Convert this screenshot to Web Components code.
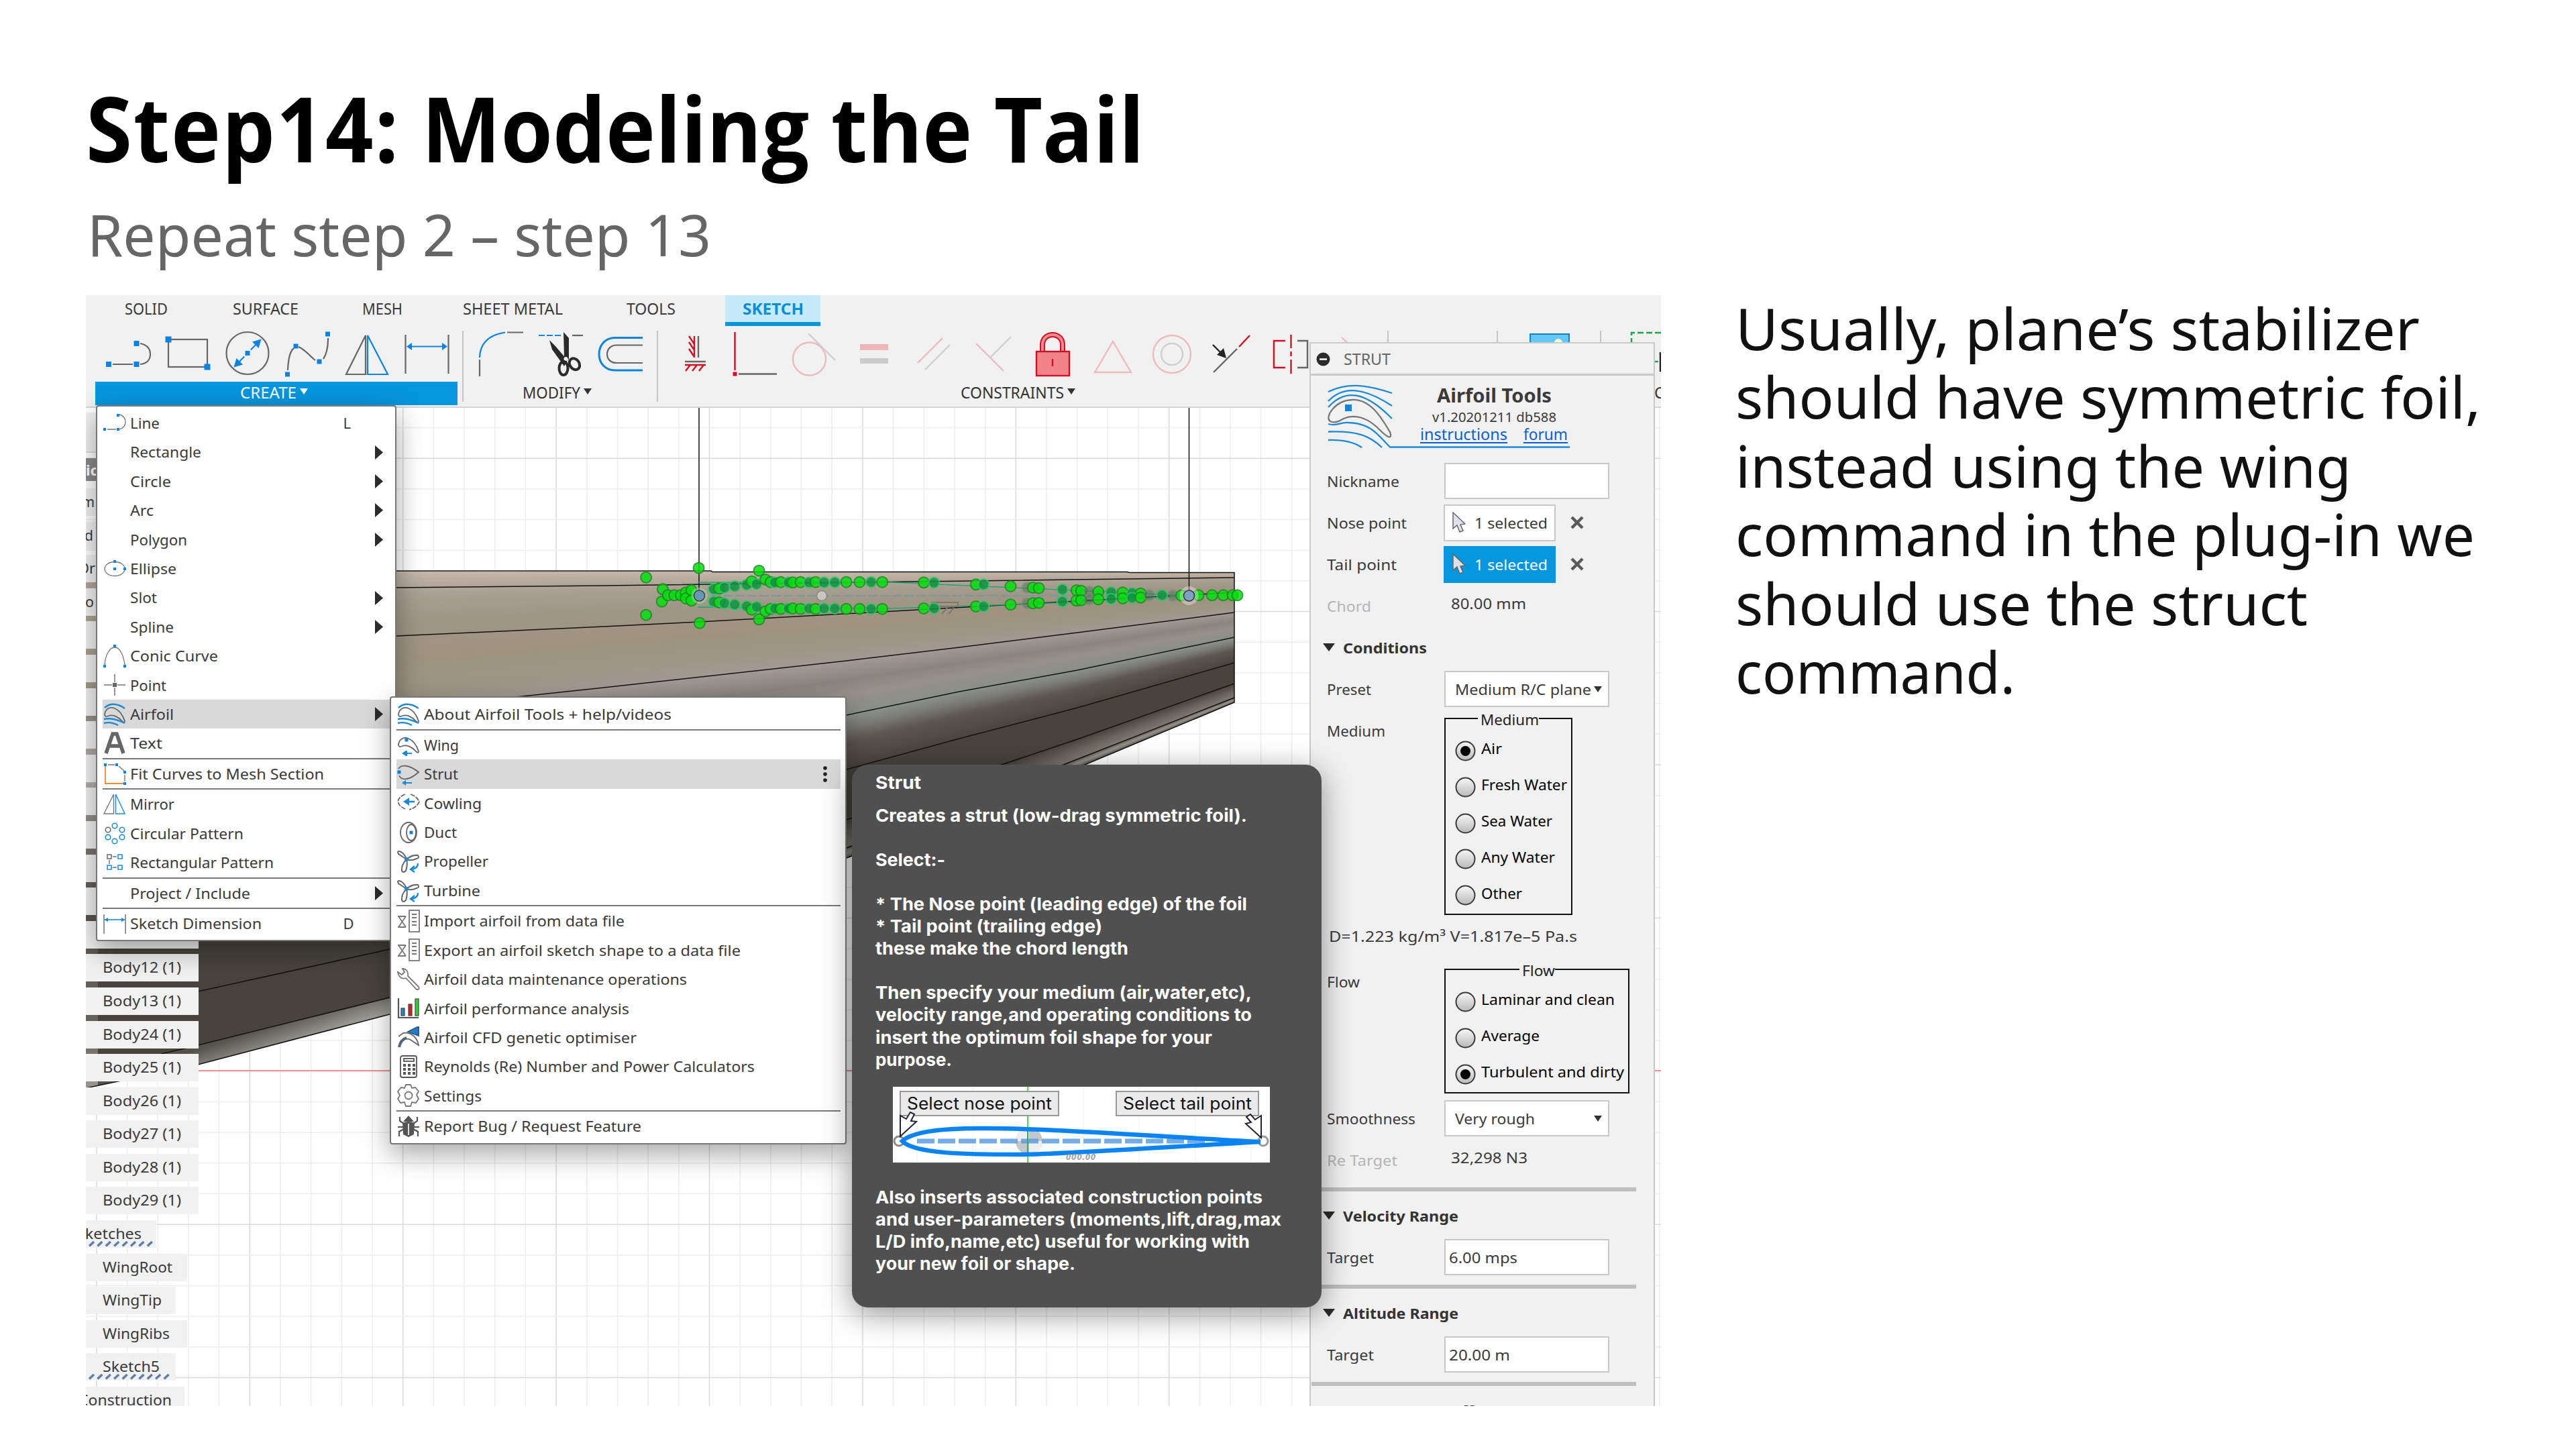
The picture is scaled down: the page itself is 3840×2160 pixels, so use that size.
<!DOCTYPE html>
<html lang="en">
<head>
<meta charset="utf-8">
<title>Step14: Modeling the Tail</title>
<style>
html,body{margin:0;padding:0;background:#fff}
body{width:3840px;height:2160px;overflow:hidden;font-family:"Noto Sans","Open Sans",sans-serif}
</style>
</head>
<body>
<slide-page></slide-page>
<script>
const B='#1a8ad6', G='#666', K='#333';
const define=(name,render)=>customElements.define(name,class extends HTMLElement{
  constructor(){super();this.attachShadow({mode:'open'});}
  connectedCallback(){if(!this.shadowRoot.firstChild)this.shadowRoot.innerHTML=render(this);}
});
const sq=(x,y,s=9,c='#0a84e0')=>`<rect x="${x-s/2}" y="${y-s/2}" width="${s}" height="${s}" fill="${c}" stroke="none"/>`;
const foil='<path d="M2 17C3 8 11 5 17 8C25 11 29 18 32 27C32 30 30 29 28 27C22 20 14 17 8 19C4 21 2 20 2 17Z" stroke="#666"/>';
const waves=`<g stroke="${B}" stroke-width="2.4"><path d="M2 7C10 0 20 0 32 8"/><path d="M1 24C11 22 19 24 32 30"/><path d="M1 30C8 28 16 30 22 33"/></g>`;
const prop='<g stroke="#666" stroke-width="2"><path d="M14 14L2 6Q-1 0 6 3Q12 7 14 14Z"/><path d="M14 14Q22 7 31 8Q34 12 29 13Q20 17 14 14Z"/><path d="M14 14Q6 22 7 31Q9 35 13 31Q16 22 14 14Z"/></g><g stroke="#1a8ad6" stroke-width="2.4"><path d="M31 20Q31 27 22 29M26 24L20 29L26 33"/></g><circle cx="14" cy="14" r="3" fill="#1a8ad6"/>';
const sheet='<g stroke="#777" stroke-width="1.8"><path d="M1 10H13M1 26H13M2 10L13 26M13 10L2 26"/><rect x="18" y="1" width="15" height="32"/><path d="M22 7H29M22 12H29M22 18H29M22 23H29"/></g>';
const ICONS={
 line:`<path d="M6 26H19M24 4C30 5 33 10 33 15S30 24 24 26" stroke="#777" stroke-width="1.3"/>${sq(2,26,4)}${sq(22,26,4)}${sq(22,5,4)}`,
 ellipse:`<ellipse cx="17" cy="17" rx="15" ry="10.500" stroke="#777" stroke-width="1.3"/>${sq(17,6,4)}${sq(17,17,4)}${sq(32,17,4)}`,
 conic:`<path d="M2 30C3 16 9 4 17 4S30 16 32 30" stroke="#777" stroke-width="1.3"/>${sq(2,32,4)}${sq(32,32,4)}${sq(17,2,4)}`,
 point:`<path d="M1 17H13M21 17H33M17 1V13M17 21V33" stroke="#777" stroke-width="1.5"/>${sq(17,17,6,'#666')}`,
 airfoil:foil+waves,
 text:'<path d="M4 32L14 3H20L30 32M9 21H25" stroke="#666" stroke-width="5.500"/>',
 fit:`<path d="M3 5V31H32" stroke="#f08a30" stroke-width="1.8"/><path d="M7 3H17M23 5L31 12M32 18V28" stroke="#777" stroke-width="1.4"/>${sq(3,3,4)}${sq(20,3,4)}${sq(32,14,4)}${sq(32,31,4)}`,
 mirror:`<path d="M15.500 2V31H1Z" stroke="#777" stroke-width="1.4"/><path d="M18.500 2V31H32Z" stroke="${B}" stroke-width="1.4"/>`,
 circ:`<g stroke="${B}" stroke-width="1.5"><circle cx="17" cy="5" r="3.800"/><circle cx="28" cy="11" r="3.800"/><circle cx="28" cy="22" r="3.800"/><circle cx="17" cy="28" r="3.800"/><circle cx="7" cy="22" r="3.800"/><circle cx="7" cy="11" r="3.800" stroke="#666"/></g>`,
 rect:`<g stroke="${B}" stroke-width="1.5"><rect x="6" y="5" width="6" height="6" stroke="#666"/><rect x="22" y="5" width="6" height="6"/><rect x="6" y="21" width="6" height="6"/><rect x="22" y="21" width="6" height="6"/><path d="M14 8H20M14 24H20M9 13V19" stroke="#777"/></g>`,
 dim:`<path d="M1 3V32M33 3V32" stroke="#666" stroke-width="1.4"/><path d="M3 11H31" stroke="${B}" stroke-width="1.6"/><path d="M1 11L7 8V14ZM33 11L27 8V14Z" fill="${B}"/>`,
 wing:`<g transform="translate(0 -1)">${foil}</g>${sq(14,9,5)}<path d="M10 29H22M14 25V33" stroke="${B}" stroke-width="2"/><path d="M7 29L13 25V33Z" fill="${B}"/>`,
 strut:`<path d="M2 9C6 2 18 3 32 14C20 25 7 28 3 19" stroke="#666"/>${sq(3,14,5)}<path d="M10 30H22" stroke="${B}" stroke-width="2"/><path d="M7 30L13 26V34Z" fill="${B}"/>`,
 cowl:`<path d="M12 4C-2 9-2 20 12 26M20 4C27 6 32 12 33 15C31 20 26 25 18 27" stroke="#666" stroke-dasharray="7 1.500"/><path d="M14 15H26" stroke="${B}" stroke-width="2.600"/><path d="M9 15L18 9V21Z" fill="${B}"/>`,
 duct:`<ellipse cx="17" cy="17" rx="12" ry="15" stroke="#666"/><ellipse cx="21" cy="17" rx="7" ry="12" stroke="#666"/>${sq(21,17,5)}`,
 prop, sheet,
 wrench:'<path d="M1 6C2 14 8 17 13 15L29 32Q34 33 32 28L16 12C17 6 14 1 8 1L11 6L7 10Z" stroke="#777"/>',
 chart:'<path d="M2 2V31H32" stroke="#555" stroke-width="2.200"/><g stroke="#444" stroke-width="1.200"><rect x="6" y="17" width="5" height="11" fill="#2f7fc0"/><rect x="17" y="11" width="5" height="17" fill="#d02020"/><rect x="27" y="3" width="5" height="25" fill="#2fd32f"/></g>',
 cfd:'<path d="M3 30C5 22 12 16 20 20L32 28C30 16 20 8 9 10L2 15" stroke="#666"/><path d="M3 31Q5 20 14 17" stroke="#567" stroke-width="4"/><path d="M16 8L32 0V14Z" fill="#1a7fd0" stroke="#357"/>',
 calc:'<rect x="5" y="1" width="24" height="32" rx="3" stroke="#555"/><rect x="10" y="5" width="15" height="4" stroke="#555"/><g stroke="#555" stroke-width="4" stroke-dasharray="4 3"><path d="M9 15H27M9 21H27M9 27H27"/></g>',
 gear:'<path d="M13 1H20L22 6L27 5L32 11L29 16L32 22L28 28L22 27L20 33H13L11 27L5 28L1 22L4 17L1 11L6 5L11 6Z" stroke="#777"/><circle cx="17" cy="17" r="5.500" stroke="#777"/>',
 bug:'<path d="M17 1L25 10H9ZM8 12Q17 8 26 12L25 29L17 33L9 29Z" fill="#555"/><path d="M4 3V9L10 13M30 3V9L24 13M1 18H33M3 32V25L10 21M31 32V25L24 21" stroke="#555" stroke-width="2.200"/><path d="M17 13V30" stroke="#ddd" stroke-width="2"/>'
};
const svgIcon=n=>`<svg viewBox="0 0 34 34" width="34" height="34" fill="none" stroke-width="1.8">${ICONS[n]||''}</svg>`;

/* menus */
define('menu-row',e=>`<style>
:host{display:flex;align-items:center;height:43.4px;line-height:43.4px;font-size:22px;color:#3a3a3a;padding-right:11px;box-sizing:border-box}
:host([on]){background:#d9d9d9}
.i{width:34px;height:34px;margin:0 6.800px 0 1px;flex:none}svg{display:block}
.r{margin-left:auto}.k{width:59px;margin-left:auto}
</style><span class="i">${svgIcon(e.getAttribute('icon'))}</span><fit-text w="${e.getAttribute('w')}">${e.getAttribute('label')}</fit-text>
${e.hasAttribute('sub')?'<svg class="r" width="12" height="21"><path d="M0 0L12 10.500L0 21Z" fill="#2b2b2b"/></svg>':''}
${e.hasAttribute('key')?`<span class="k">${e.getAttribute('key')}</span>`:''}
${e.hasAttribute('more')?'<svg class="r" width="8" height="26" style="margin-right:8px"><g fill="#222"><circle cx="4" cy="4" r="2.800"/><circle cx="4" cy="13" r="2.800"/><circle cx="4" cy="22" r="2.800"/></g></svg>':''}`);
define('menu-rule',()=>`<style>:host{display:block;height:2.200px;background:#7a7a7a}</style>`);
define('menu-box',()=>`<style>:host{display:block;box-sizing:border-box;background:#fff;border:2px solid #777;border-radius:4px;box-shadow:0 14px 40px rgba(0,0,0,.35)}
div{display:flex;flex-direction:column}</style><div><slot></slot></div>`);
const row=(l,w,i='',x='')=>`<menu-row label="${l}" w="${w}" icon="${i}" ${x}></menu-row>`;
const R='<menu-rule></menu-rule>';

/* ribbon */
const cv=c=>`<svg width="12" height="9" style="margin:0 0 3px 5px"><path d="M0 0H12L6 9Z" fill="${c}"/></svg>`;
define('ribbon-tab',e=>`<style>:host{display:flex;height:40px;align-items:center;justify-content:center;font-size:23px;color:#3a3a3a;box-sizing:content-box;border-bottom:6.500px solid transparent}
:host([on]){background:#c5ebfa;background-clip:padding-box;border-color:#0696d7;color:#0a8fd4;font-weight:700;width:142px}</style><fit-text w="${e.getAttribute('w')}"><slot></slot>${e.getAttribute('label')}</fit-text>`);
define('ribbon-group',e=>`<style>:host{display:flex;flex-direction:column;width:${e.getAttribute('width')}px;flex:none;height:117px}
svg{display:block}.l{display:flex;height:35px;line-height:33px;align-items:center;justify-content:center;font-size:23px;color:#333;box-sizing:border-box;padding-bottom:2px}
:host([on]) .l{background:#0696dd;color:#fff}</style><slot></slot>
<div class="l" style="padding-right:${e.getAttribute('pad')||0}px">${e.hasAttribute('label')?`<fit-text w="${e.getAttribute('w')}">${e.getAttribute('label')}</fit-text>${cv(e.hasAttribute('on')?'#fff':'#333')}`:''}</div>`);
define('ribbon-bar',()=>`<style>:host{display:block;height:166px;background:#f1f1f1;border-bottom:2px solid #d4d4d4}
.t{display:flex;height:46.500px}.g{display:flex}.s{width:2px;height:106px;background:#c6c6c6;margin-top:6px;flex:none}svg{display:block}</style>
<div class="t"><ribbon-tab label="SOLID" w="64" style="margin-left:58px"></ribbon-tab><ribbon-tab label="SURFACE" w="98" style="margin-left:97px"></ribbon-tab><ribbon-tab label="MESH" w="60" style="margin-left:95px"></ribbon-tab><ribbon-tab label="SHEET METAL" w="149" style="margin-left:90px"></ribbon-tab><ribbon-tab label="TOOLS" w="73" style="margin-left:95px"></ribbon-tab><ribbon-tab on label="SKETCH" w="91" style="margin-left:74px"></ribbon-tab></div>
<div class="g">
<ribbon-group on label="CREATE" w="84" width="540" pad="8" style="margin:0 7px 0 14px">
<svg width="540" height="82" viewBox="142 486 540 82" fill="none" stroke="${G}" stroke-width="2.200">
<path d="M168 542H198M209 511C219 513 224 519 224 527S219 541 209 542"/>${sq(162,542,8)}${sq(203.5,542,8)}${sq(203.5,511,8)}
<rect x="251" y="505" width="58" height="41"/>${sq(251,505)}${sq(309,546)}
<circle cx="369" cy="525.500" r="31.500"/><path d="M352 543L386 508" stroke="#0a84e0"/><path d="M388 506L378 509L385 516ZM350 545L360 542L353 535Z" fill="#0a84e0" stroke="#0a84e0"/><circle cx="369" cy="525.500" r="7" fill="#f1f1f1" stroke="none"/>${sq(369,525.5,7)}
<path d="M429 551Q430 524 438 518M445 516C455 520 464 532 470 536M482 534Q489 524 489 503"/>${sq(428.5,557,7)}${sq(441,515,7)}${sq(476,538,7)}${sq(488.5,497,7)}
<path d="M545 499V557H516Z"/><path d="M548 499V557H578Z" stroke="#0a84e0"/>
<path d="M604.500 498V556M668.500 498V556"/><path d="M608 515.500H665" stroke="#0a84e0"/><path d="M606 515.500L614 510V521ZM667 515.500L659 510V521Z" fill="#0a84e0" stroke="none"/>
</svg></ribbon-group><span class="s"></span>
<ribbon-group label="MODIFY" w="86" width="288" pad="10">
<svg width="288" height="82" viewBox="692 486 288 82" fill="none" stroke="${G}" stroke-width="2.200">
<path d="M716 532Q717 500 754 494.500" stroke="#0a84e0"/><path d="M757 494.500H781M716 535V560"/>
<path d="M804 499H837" stroke="#0a84e0" stroke-dasharray="9 3"/><path d="M854 499H870"/>
<path d="M841 494L849 503V535L842 531ZM820 506L828 514L847 536L842 545L824 520Z" fill="#2a2a2a" stroke="none"/><circle cx="844.500" cy="534" r="3" fill="#f1f1f1" stroke="none"/><ellipse cx="841" cy="548" rx="6.500" ry="10" stroke="#2a2a2a" stroke-width="4"/><ellipse cx="857.500" cy="542" rx="7" ry="9" transform="rotate(-35 857 542)" stroke="#2a2a2a" stroke-width="4"/>
<path d="M959 502.500H918C902 502.500 894 515 894 527S902 551 918 551H959" stroke="#0a84e0" stroke-width="3"/><path d="M959 513.500H920C911 513.500 906 520 906 527S911 540 920 540H959"/>
</svg></ribbon-group><span class="s"></span>
<ribbon-group label="CONSTRAINTS" w="154" width="1087" pad="14">
<svg width="1087" height="82" viewBox="982 486 1087 82" fill="none" stroke="#cf1126" stroke-width="2.400">
<path d="M1036 500V532M1028 500L1036 512M1028 509L1036 521M1028 519L1036 531M1022 543H1053M1030 543L1023 552M1040 543L1033 552M1050 543L1043 552"/><path d="M1042 500V532M1022 538H1053" stroke="${G}"/>
<path d="M1096.500 494V551"/><path d="M1102 556.500H1159" stroke="${G}"/>${sq(1096.5,556.5,6,'#cf1126')}
<g stroke="#efbabc"><circle cx="1207.500" cy="534" r="24.500"/><path d="M1369 540L1406 503M1456 511L1497 552M1660 508L1687 554H1633ZM2001 502L2020 520"/><circle cx="1748" cy="527" r="28"/></g>
<g stroke="#cfcfcf"><path d="M1206 496L1246 536M1380 550L1417 513M1508 501L1478 531"/><circle cx="1748" cy="527" r="16"/></g>
<rect x="1283" y="512" width="42" height="9" fill="#efb6b8" stroke="none"/><rect x="1283" y="533" width="42" height="8" fill="#cbcbcb" stroke="none"/>
<path d="M1555 522V513C1555 493 1585 493 1585 513V522" stroke-width="8"/><path d="M1555 522V513C1555 493 1585 493 1585 513V522" stroke="#ef8b90" stroke-width="4"/><rect x="1546" y="523" width="49" height="36" fill="#ef8388"/><path d="M1570 534V545"/>
<path d="M1848 516L1864 499M1917 507H1900V547H1917M1925.500 498V518M1925.500 523V530M1925.500 535V556"/><path d="M1810 554L1845 519M1935 507H1950V547H1935" stroke="${G}"/><path d="M1809 513L1824 528" stroke="#222"/><path d="M1829 533L1815 528L1825 518Z" fill="#222" stroke="none"/>
</svg></ribbon-group><span class="s"></span>
<ribbon-group width="161"></ribbon-group><span class="s"></span><ribbon-group width="152"><svg width="152" height="82" viewBox="2233 486 152 82"><rect x="2281" y="497" width="58" height="50" fill="#62c8fa" stroke="#1480c4" stroke-width="2"/><circle cx="2323" cy="510" r="6" fill="#fffcd0"/></svg></ribbon-group><span class="s"></span>
<ribbon-group width="89"><svg width="89" height="82" viewBox="2387 486 89 82" fill="none" stroke="#1ea54a" stroke-width="2.500" stroke-dasharray="9 4"><path d="M2476 495H2432V530M2467 538H2472"/><path d="M2475 524V553" stroke="#222" stroke-dasharray="none"/></svg></ribbon-group>
</div>`);

/* modelling canvas */
const mix=(a,b,t)=>'#'+[1,3,5].map(i=>Math.round(parseInt(a.substr(i,2),16)*(1-t)+parseInt(b.substr(i,2),16)*t).toString(16).padStart(2,'0')).join('');
const shade=(stops,t)=>{for(let i=1;i<stops.length;i++)if(t<=stops[i][0]){const[a,c]=stops[i-1],[b,d]=stops[i];return mix(c,d,(t-a)/(b-a));}return stops[stops.length-1][1];};
/* fills the region between two edge curves with strips that follow both of them */
function band(top,bot,stops,n=40){
 let o='';const low=bot.map((y,i)=>[XS[i],y]).reverse().map(p=>p.join(' ')).join('L');
 for(let k=0;k<n;k++){const up=top.map((y,i)=>XS[i]+' '+(y+(bot[i]-y)*k/n).toFixed(1)).join('L');o+=`<path d="M${up}L${low}Z" fill="${shade(stops,k/(n-1))}"/>`;}
 return o;
}
const XS=[128,580,900,1262,1430,1606,1840];
function canvas(){
 let g='';const p=45.68;
 for(let k=-21;k<32;k++){const x=1057.5+k*p;if(x>128)g+=`<path d="M${x.toFixed(1)} 607V2096" stroke="${k%5?'#ededed':'#dadada'}"/>`;}
 for(let k=-1;k<32;k++){const y=683.2+k*p;g+=`<path d="M128 ${y.toFixed(1)}H2476" stroke="${k%5?'#ededed':'#dadada'}"/>`;}
 const X=x=>900+x/1.568,Y=y=>800+y/3;
 const dark=[257,282,306,334,357,400,432,480,515,540,625,772,888,1072,1186,1235,1305],gray=[990,1135,1275,1330];
 const up=[[257,235],[270,232],[282,228],[306,222],[334,215],[346,200],[357,212],[378,192],[390,203],[400,205],[414,203],[432,205],[442,205],[460,203],[480,205],[495,203],[515,205],[540,205],[567,203],[598,203],[625,203],[651,203],[748,205],[772,206],[870,214],[888,214],[951,222],[990,228],[1003,228],[1017,230],[1072,236],[1105,240],[1116,242],[1135,245],[1156,246],[1186,248],[1213,250],[1235,252],[1255,254]];
 const pts=[...up,...up.map(([x,y])=>[x,526-y]),[99,182],[99,350],[222,140],[224,386],[363,152],[363,370],[138,235],[136,290],[150,262],[165,262],[180,262],[192,250],[192,276],[205,240],[205,286],[1275,262],[1305,262],[1330,264],[1350,263],[1390,262],[1422,262],[1448,262],[1470,262],[1481,262]];
 const d=pts.map(([x,y])=>{const c=dark.includes(x)?['#0f9440','#35c468']:gray.includes(x)?['#55705c','#6c8a74']:['#06e010','#1f8a22'];return `<circle cx="${X(x).toFixed(1)}" cy="${Y(y).toFixed(1)}" r="8" fill="${c[0]}" stroke="${c[1]}" stroke-width="2" opacity="${gray.includes(x)?.5:.86}"/>`}).join('');
 const edge='L1840 1047L1617 1140L1262 1279L900 1408L581 1512L295 1587L128 1622';
 const T=[851,851,851,852.5,852.5,853,853.5],l3=[1150,1072,1025,985,965,943,913],l4=[1290,1190,1130,1066,1031,999,950.7],l5=[1400,1330,1250,1147,1101,1055,988],l6=[1597,1487,1360,1222,1164,1102,1019],l7=[1609,1500,1390,1264,1200,1132,1040],ed=[1622,1512,1408,1279,1213,1144,1047];
 return `<svg width="2348" height="1488" viewBox="128 608 2348 1488" fill="none" stroke-width="1.500"><defs>
 <linearGradient id="f" gradientUnits="userSpaceOnUse" x1="0" y1="851" x2="0" y2="1620"><stop offset="0" stop-color="#b2a899"/><stop offset=".2" stop-color="#a79e8f"/><stop offset=".28" stop-color="#94908a"/><stop offset=".4" stop-color="#bab7b0"/><stop offset=".5" stop-color="#85827d"/><stop offset=".65" stop-color="#57544d"/><stop offset=".9" stop-color="#67655e"/><stop offset="1" stop-color="#98968f"/></linearGradient>
 <linearGradient id="e" gradientUnits="userSpaceOnUse" x1="430" y1="1518" x2="443" y2="1556"><stop offset="0" stop-color="#55524c"/><stop offset="1" stop-color="#a09e98"/></linearGradient>
 <clipPath id="m"><path d="M128 851L1840 853.500${edge}Z"/></clipPath></defs>
 ${g}<path d="M128 1596H2476" stroke="#f0939b" stroke-width="2"/>
 <g clip-path="url(#m)"><path d="M128 851L1840 853.500${edge}Z" fill="#48443d"/>
 ${band(T,l3,[[0,'#c1b6a8'],[.14,'#aba194'],[.32,'#a19787'],[.6,'#9d937f'],[.82,'#9e9583'],[1,'#a19a93']])}
 ${band(l3,l4,[[0,'#a19a93'],[.35,'#8a8580'],[.62,'#97918b'],[1,'#8b8f8a']])}
 ${band(l4,l5,[[0,'#8b918d'],[.22,'#7b7b77'],[.5,'#5c5650'],[1,'#4b4640']])}
 ${band(l6,l7,[[0,'#4b4640'],[.6,'#6d6861'],[1,'#7d7871']],20)}
 ${band(l7,ed,[[0,'#6a655f'],[.5,'#96938c'],[1,'#67635d']],10)}
 <path d="M128 1597L295 1558L581 1487L700 1457V1475L581 1512L295 1587L128 1622Z" fill="url(#e)"/>
 <path d="M128 851H146V1618L128 1622Z" fill="url(#f)"/></g>
 <path d="M128 851L1060 851L1062 852.500H1680L1684 853.500H1840${edge}" stroke="#111"/>
 <path d="M591 876L900 873L1840 861M591 948L900 934L1043 927L1840 883M740 1042L900 1025L1262 985L1430 965L1606 943L1840 913M1262 1066L1430 1031L1606 999L1840 950M1262 1147L1430 1101L1606 1055L1840 988M1262 1222L1493 1140L1606 1102L1840 1019M1262 1264L1585 1140L1840 1040M295 1478L581 1415M295 1558L581 1487M240 1571L280 1562" stroke="#15130f"/>
 <path d="M1042 608V888M1772.500 608V888" stroke="#111"/>
 <path d="M1060 888H1760" stroke="#6f98a8" stroke-dasharray="14 4"/><path d="M1040 868H1330L1600 880L1772 888L1600 898L1330 907L1040 905" stroke="#22a572"/>
 <g stroke="#7d776e" stroke-width="2"><path d="M1389 898H1428V904H1389ZM1402 906L1394 915M1412 906L1404 915M1422 906L1414 915"/></g>${d}
 <circle cx="1225" cy="888" r="7.500" fill="#c9c6bf" stroke="#8c887f"/>
 <circle cx="1042.500" cy="888" r="12" fill="#9fe6a0" opacity=".45"/><circle cx="1042.500" cy="888" r="8" fill="#6d96b5" stroke="#345"/><circle cx="1772.500" cy="888" r="14" fill="#fff" opacity=".35"/><circle cx="1772.500" cy="888" r="8" fill="#7f9fc4" stroke="#334"/>
 </svg>`;
}
define('model-view',()=>`<style>:host{display:block;background:#fff}svg{display:block}</style>${canvas()}`);

/* component tree */
define('tree-row',e=>`<style>:host{display:flex;height:41px;margin-bottom:8.600px;line-height:40px;font-size:22.500px;color:#3a3a3a;background:#f1f1f1;width:${e.getAttribute('bg')}px;box-sizing:border-box;padding-left:25px;overflow:hidden;flex:none;position:relative}
fit-text{margin-left:${e.getAttribute('dx')||0}px}svg{position:absolute;left:0;top:31px}</style>
<fit-text w="${e.getAttribute('w')}">${e.getAttribute('label')}</fit-text>${e.hasAttribute('hatch')?`<svg width="${e.getAttribute('hatch')}" height="9"><g stroke="#5f7fa8" stroke-width="3.500">${[...Array(10)].map((_,i)=>`<path d="M${5+i*12.4} 7.500L${12+i*12.4} 1"/>`).join('')}</g></svg>`:''}`);
const tr=(l,w,bg,x='')=>`<tree-row label="${l}" w="${w}" bg="${bg}" ${x}></tree-row>`;
define('component-tree',()=>`<style>:host{display:block;width:168px;height:1489px;overflow:hidden}
.top{height:58px;background:#f1f1f1;border-bottom:2px solid #ddd;margin-top:8px}.root{height:34px;background:#8a8a8a;margin:8px 0 11px;color:#fff;font:700 22px/34px "Noto Sans";width:16px;overflow:hidden}
.c{display:flex;flex-direction:column}</style><div class="top"></div><div class="root">ic</div><div class="c">
${tr('m',19,160,'dx="-31"')}${tr('d',13,160,'dx="-27"')}${tr('Or',26,160,'dx="-37"')}${tr('o',13,160,'dx="-26"')}${'<tree-row label="" w="0" bg="167.5"></tree-row>'.repeat(10)}
${[12,13,24,25,26,27,28,29].map(n=>tr(`Body${n} (1)`,117,167.5)).join('')}
${tr('Sketches',97,105,'dx="-39" hatch="103"')}${tr('WingRoot',104,151)}${tr('WingTip',88,134)}${tr('WingRibs',100,151)}${tr('Sketch5',85,134,'hatch="126"')}${tr('Construction',139,147,'dx="-36"')}</div>`);

/* strut dialog */
define('prop-row',e=>`<style>:host{display:flex;height:${e.getAttribute('h')||62}px;line-height:62px;align-items:${e.hasAttribute('h')?'flex-start':'center'};padding-left:24px}
.l{width:174px;flex:none;color:${e.hasAttribute('dim')?'#b5b5b5':'#3a3a3a'}}</style><span class="l"><fit-text w="${e.getAttribute('w')}">${e.getAttribute('label')}</fit-text></span><slot></slot>`);
define('section-head',e=>`<style>:host{display:flex;height:62px;line-height:62px;align-items:center;padding-left:17.500px;font-weight:700;color:#333}svg{margin:0 12px 1px 0}</style><svg width="18" height="12"><path d="M0 0H18L9 12Z" fill="#2b2b2b"/></svg><fit-text w="${e.getAttribute('w')}">${e.getAttribute('label')}</fit-text>`);
define('text-field',e=>`<style>:host{display:flex;align-items:center;box-sizing:border-box;width:246px;height:54px;margin-left:1px;background:#fff;border:2px solid #c8c8c8;padding:0 9px 0 ${e.hasAttribute('pick')?14:5}px;line-height:50px;justify-content:space-between}</style>${e.hasAttribute('label')?`<fit-text w="${e.getAttribute('w')}">${e.getAttribute('label')}</fit-text>`:''}${e.hasAttribute('pick')?'<svg width="12" height="9"><path d="M0 0H12L6 9Z" fill="#333"/></svg>':''}`);
define('select-chip',()=>`<style>:host{display:flex;align-items:center;box-sizing:border-box;width:167px;height:55px;background:#fff;border:2px solid #c8c8c8;line-height:50px;padding-left:11px}
:host([on]){background:#0696dd;border-color:#0696dd;color:#fff}fit-text{margin-left:13px}</style><svg width="20" height="32" viewBox="0 0 20 32"><path d="M1 1V25L7 20L11 30L16 28L12 19L19 18Z" fill="#dfe1e8" stroke="#666" stroke-width="1.500"/></svg><fit-text w="109">1 selected</fit-text>`);
define('radio-dot',e=>`<style>:host{display:flex;height:53.800px;align-items:center;color:#000;line-height:30px}fit-text{margin:0 0 8px 8px}</style><svg width="31" height="31"><defs><linearGradient id="r" x2="0" y2="1"><stop stop-color="#f7f7f7"/><stop offset="1" stop-color="#b9b9b9"/></linearGradient></defs><circle cx="15.500" cy="15.500" r="14" fill="url(#r)" stroke="#3a3a3a" stroke-width="2"/>${e.hasAttribute('on')?'<circle cx="15.500" cy="15.500" r="7.500"/>':''}</svg><fit-text w="${e.getAttribute('w')}">${e.getAttribute('label')}</fit-text>`);
define('radio-set',e=>`<style>:host{display:flex;flex-direction:column;box-sizing:border-box;margin:12px 0 0 1px;width:${e.getAttribute('width')}px;height:${e.getAttribute('height')}px;border:2px solid #111;padding-left:14px}
.g{height:20.600px;margin-left:-14px;display:flex;justify-content:center}.g span{height:30px;line-height:30px;margin-top:-15px;background:#f1f1f1;padding-left:4px;color:#222}</style><div class="g"><span><fit-text w="${e.getAttribute('w')}">${e.getAttribute('label')}</fit-text></span></div><slot></slot>`);
const xx='<svg width="22" height="22" style="margin-left:21px"><path d="M3 3L19 19M19 3L3 19" stroke="#5a5a5a" stroke-width="4.500"/></svg>';
define('strut-dialog',()=>`<style>:host{display:flex;flex-direction:column;box-sizing:border-box;width:515px;height:1586px;overflow:hidden;background:#f1f1f1;border:2px solid #c9c9c9;border-bottom:0;font-size:22px;color:#3a3a3a}
.h{display:flex;align-items:center;height:45px;border-bottom:3px solid #c9c9c9;color:#666;flex:none;font-size:23px}.h svg{margin:2px 20px 0 8px}
.logo{display:grid;height:126px;flex:none}.logo>*{grid-area:1/1}.t{display:flex;flex-direction:column;align-items:center;padding:11px 0 0 35px}
.t b{font-size:28px;line-height:36px}.v{font-size:20px;line-height:26px;margin-top:2px}.k{font-size:23px;line-height:29px;display:flex;gap:24px;color:#0d5fd0;margin-top:-2px}.k fit-text{border-bottom:2px solid #0d5fd0;height:26px}
.val{margin:0 0 9px 11px}.bar{height:6px;background:#bfbfbf;width:484px;margin:9.500px 0 5.500px 1px;flex:none}.d{height:60px;line-height:47px;padding-left:27px;flex:none}
prop-row,section-head{flex:none}</style>
<div class="h"><svg width="21" height="21"><circle cx="10.500" cy="10.500" r="10" fill="#2b2b2b"/><path d="M5 10.500H16" stroke="#fff" stroke-width="2.500"/></svg><fit-text w="70">STRUT</fit-text></div>
<div class="logo"><svg width="511" height="126" viewBox="1954 560 511 126" fill="none" stroke="${B}" stroke-width="2.300"><path d="M1980 584C2005 572 2030 571 2075 586M1980 598C2003 574 2034 578 2075 605M1980 607C2005 579 2035 583 2075 624M1980 632C1994 636 1997 629 2010 630C2045 631 2055 650 2072 666.500H2340M1980 643.500C2020 642 2040 648 2060 667M1980 656Q2012 655 2030 667"/><path d="M1983 628C1974 622 1990 597 2015 596C2045 594 2062 628 2072 644C2076 656 2068 652 2058 642C2038 621 2018 617 2003 624Q1990 632 1983 628Z" stroke="#777"/>${sq(2010,608,10)}</svg>
<div class="t"><b><fit-text w="171">Airfoil Tools</fit-text></b><span class="v"><fit-text w="185">v1.20201211 db588</fit-text></span><span class="k"><fit-text w="130">instructions</fit-text><fit-text w="66">forum</fit-text></span></div></div>
<prop-row label="Nickname" w="108"><text-field></text-field></prop-row>
<prop-row label="Nose point" w="119"><select-chip></select-chip>${xx}</prop-row>
<prop-row label="Tail point" w="104"><select-chip on></select-chip>${xx}</prop-row>
<prop-row dim label="Chord" w="66"><span class="val"><fit-text w="112">80.00 mm</fit-text></span></prop-row>
<section-head label="Conditions" w="125"></section-head>
<prop-row label="Preset" w="66"><text-field pick label="Medium R/C plane" w="203"></text-field></prop-row>
<prop-row h="314" label="Medium" w="87"><radio-set label="Medium" w="87" width="191" height="294"><radio-dot on label="Air" w="31"></radio-dot><radio-dot label="Fresh Water" w="128"></radio-dot><radio-dot label="Sea Water" w="106"></radio-dot><radio-dot label="Any Water" w="110"></radio-dot><radio-dot label="Other" w="61"></radio-dot></radio-set></prop-row>
<div class="d"><fit-text w="370">D=1.223 kg/m³ V=1.817e–5 Pa.s</fit-text></div>
<prop-row h="204" label="Flow" w="49"><radio-set label="Flow" w="49" width="276" height="186"><radio-dot label="Laminar and clean" w="199"></radio-dot><radio-dot label="Average" w="87"></radio-dot><radio-dot on label="Turbulent and dirty" w="213"></radio-dot></radio-set></prop-row>
<prop-row label="Smoothness" w="132"><text-field pick label="Very rough" w="119"></text-field></prop-row>
<prop-row dim label="Re Target" w="105"><span class="val"><fit-text w="114">32,298 N3</fit-text></span></prop-row>
<div class="bar"></div><section-head label="Velocity Range" w="172"></section-head>
<prop-row label="Target" w="70"><text-field label="6.00 mps" w="102"></text-field></prop-row>
<div class="bar"></div><section-head label="Altitude Range" w="172"></section-head>
<prop-row label="Target" w="70"><text-field label="20.00 m" w="91"></text-field></prop-row>
<div class="bar"></div><section-head label="Temperature Offset Range" w="311"></section-head>`);

/* tooltip */
const L=(t,w)=>`<p>${t?`<fit-text w="${w}">${t}</fit-text>`:''}</p>`;
define('command-tip',()=>`<style>:host{display:block;box-sizing:border-box;width:700px;height:809px;border-radius:24px;background:#505050;color:#fff;font:650 26px/33.100px Inter,"Liberation Sans",sans-serif;padding:10px 0 0 35px;box-shadow:0 10px 46px rgba(0,0,0,.42)}
p{margin:0;height:33.100px}.first{margin-bottom:15.500px}.fig{margin:24px 0 35px 26px;width:562px;height:113px;background:#fff;display:grid}.fig>*{grid-area:1/1}
.lab{display:flex;justify-content:space-between;padding:6px 16px 0 10px;height:38px;font-weight:400;font-size:25px;color:#111}.lab span{background:#eaeaea;border:2px solid #999;box-sizing:border-box;height:38px;line-height:35px;padding:0 9px}</style>
<div class="first">${L('Strut',68)}</div>${L('Creates a strut (low-drag symmetric foil).',554)}${L()}${L('Select:-',104)}${L()}${L('* The Nose point (leading edge) of the foil',554)}${L('* Tail point (trailing edge)',338)}${L('these make the chord length',377)}${L()}${L('Then specify your medium (air,water,etc),',561)}${L('velocity range,and operating conditions to',561)}${L('insert the optimum foil shape for your',502)}${L('purpose.',114)}
<div class="fig"><svg width="562" height="113" fill="none"><path d="M36 0V113M119 0V113M284 0V113M367 0V113M451 0V113M534 0V113" stroke="#eee"/><path d="M201 0V113" stroke="#4be04b" stroke-width="2"/></svg>
<div class="lab"><span><fit-text w="216">Select nose point</fit-text></span><span><fit-text w="192">Select tail point</fit-text></span></div>
<svg width="562" height="113" fill="none"><circle cx="9" cy="81" r="7" stroke="#888" stroke-width="3"/><circle cx="552" cy="81" r="7" stroke="#999" stroke-width="3"/><circle cx="203" cy="81" r="20" fill="#c4c6ca"/><path d="M203 81V61A20 20 0 0 0 183 81ZM203 81V101A20 20 0 0 0 223 81Z" fill="#efefef"/>
<path d="M36 81H470" stroke="#5c9de0" stroke-width="7" stroke-dasharray="26 5" opacity=".85"/><path d="M201 62V100" stroke="#2fae5e" stroke-width="2"/>
<path d="M14 81C30 66 80 62 130 62C230 61 420 76 548 82C420 89 250 101 190 101C110 101 32 100 14 81Z" stroke="#0a84f5" stroke-width="6.500"/>
<path d="M11 74V43L20 48L26 38L32 41L27 51L35 52ZM549 76V43L540 49L533 41L527 45L534 53L526 55Z" fill="#fff" stroke="#223" stroke-width="2"/><text x="258" y="109" font-family="Liberation Sans" font-size="13" font-style="italic" font-weight="700" fill="#999" textLength="44">000.00</text></svg></div>
${L('Also inserts associated construction points',577)}${L('and user-parameters (moments,lift,drag,max',605)}${L('L/D info,name,etc) useful for working with',558)}${L('your new foil or shape.',298)}`);

define('app-window',()=>`<style>:host{display:block;position:relative;width:2348px;height:1656px;overflow:hidden;background:#fff;flex:none}
component-tree,menu-box,strut-dialog,command-tip,.c{position:absolute}</style>
<ribbon-bar></ribbon-bar><model-view></model-view>
<component-tree style="left:0;top:167px"></component-tree>
<span class="c" style="left:2338px;top:129px;font-size:23px;color:#333">C</span>
<menu-box style="left:15px;top:163.500px;width:448px;height:799.500px;padding:3.500px 7.500px 0">
${row('Line',44,'line','key="L"')}${row('Rectangle',106,'','sub')}${row('Circle',61,'','sub')}${row('Arc',35,'','sub')}${row('Polygon',85,'','sub')}${row('Ellipse',69,'ellipse')}${row('Slot',40,'','sub')}${row('Spline',65,'','sub')}${row('Conic Curve',131,'conic')}${row('Point',54,'point')}${row('Airfoil',65,'airfoil','sub on')}${row('Text',48,'text')}${R}${row('Fit Curves to Mesh Section',289,'fit')}${R}${row('Mirror',66,'mirror')}${row('Circular Pattern',169,'circ')}${row('Rectangular Pattern',214,'rect')}${R}${row('Project / Include',179,'','sub')}${R}${row('Sketch Dimension',196,'dim','key="D"')}</menu-box>
<strut-dialog style="left:1824px;top:70px"></strut-dialog>
<menu-box style="left:453px;top:598px;width:681px;height:667.500px;padding:3.300px 7.500px 0">
${row('About Airfoil Tools + help/videos',369,'airfoil')}${R}${row('Wing',52,'wing')}${row('Strut',51,'strut','on more')}${row('Cowling',86,'cowl')}${row('Duct',49,'duct')}${row('Propeller',96,'prop')}${row('Turbine',84,'prop')}${R}${row('Import airfoil from data file',299,'sheet')}${row('Export an airfoil sketch shape to a data file',472,'sheet')}${row('Airfoil data maintenance operations',392,'wrench')}${row('Airfoil performance analysis',306,'chart')}${row('Airfoil CFD genetic optimiser',317,'cfd')}${row('Reynolds (Re) Number and Power Calculators',493,'calc')}${row('Settings',86,'gear')}${R}${row('Report Bug / Request Feature',324,'bug')}</menu-box>
<command-tip style="left:1142px;top:700px"></command-tip>`);

define('slide-page',()=>`<style>:host{display:flex;flex-direction:column;width:3840px;height:2160px;box-sizing:border-box;padding:123px 0 0 128px;background:#fff}
h1{margin:0;font:700 134px/134px "Open Sans";height:134px;padding-left:0}h1 i{font-style:normal;letter-spacing:2px}h2{margin:42px 0 41px;font:400 85px/100px "Noto Sans";height:100px;color:#666;padding-left:2px}
.row{display:flex}.note{margin:-2px 0 0 111px;font-size:86px;line-height:102.400px;color:#111}.note div{height:102.400px}</style>
<h1><fit-text w="1578"><i>Step14:</i> Modeling the Tail</fit-text></h1><h2><fit-text w="930">Repeat step 2 – step 13</fit-text></h2>
<div class="row"><app-window></app-window><div class="note">${[['Usually, plane’s stabilizer',1020],['should have symmetric foil,',1111],['instead using the wing',918],['command in the plug-in we',1102],['should use the struct',853],['command.',417]].map(([t,w])=>`<div><fit-text w="${w}">${t}</fit-text></div>`).join('')}</div></div>`);

/* Text run scaled horizontally to an exact width. */
customElements.define('fit-text',class extends HTMLElement{
 connectedCallback(){
  if(this.shadowRoot)return;
  this.attachShadow({mode:'open'}).innerHTML='<style>:host{display:inline-block;white-space:pre;flex:none}span{display:inline-block;transform-origin:0 50%}</style><span><slot></slot></span>';
  const s=this.shadowRoot.querySelector('span'),w=+this.getAttribute('w'),nat=s.getBoundingClientRect().width;
  if(nat)s.style.transform=`scaleX(${w/nat})`;
  this.style.width=w+'px';
 }
});
</script>
</body>
</html>
